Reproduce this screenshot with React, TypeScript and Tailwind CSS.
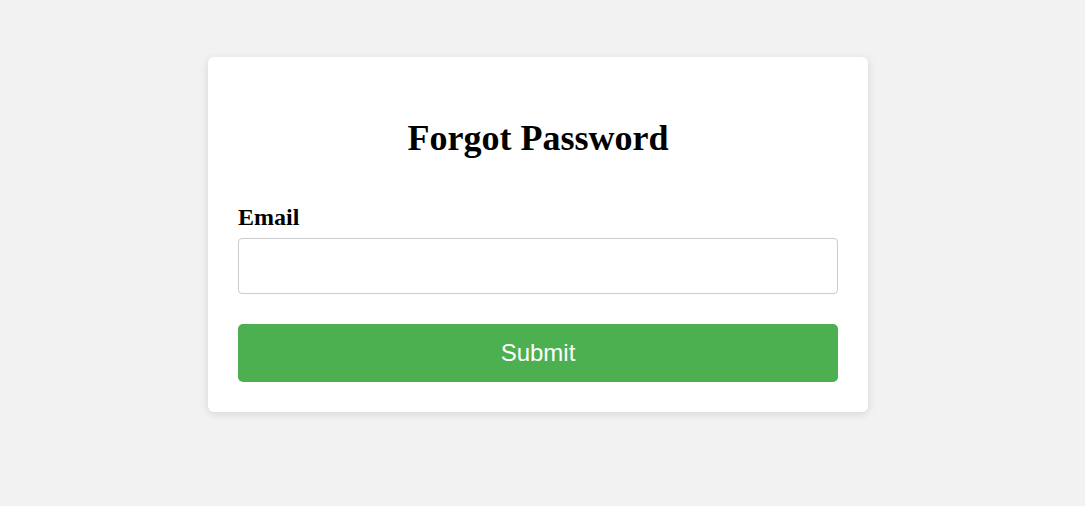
export default function App() {
  return (
    <div className="min-h-[506px] w-full bg-[#f2f2f2] flex justify-center pr-[9px] pt-[57px]">
      <div className="w-[660px] h-[355px] bg-white rounded-[6px] shadow-[0_2px_8px_rgba(0,0,0,0.12)] px-[30px] pt-[30px] flex flex-col">
        <h1
          className="mt-[33px] text-center text-[36px] leading-[36px] font-bold text-black"
          style={{ fontFamily: '"Liberation Serif", "Times New Roman", serif' }}
        >
          Forgot Password
        </h1>
        <label
          className="mt-[49px] mb-[1px] text-[24px] leading-[24px] font-bold text-black"
          style={{ fontFamily: '"Liberation Serif", "Times New Roman", serif' }}
        >
          Email
        </label>
        <input
          type="email"
          className="mt-[8px] h-[56px] w-full border border-[#cccccc] rounded-[4px] px-3 outline-none"
        />
        <button
          className="mt-[30px] h-[58px] w-full bg-[#4caf50] text-white rounded-[5px] text-[24px]"
          style={{ fontFamily: '"Liberation Sans", Arial, sans-serif' }}
        >
          Submit
        </button>
      </div>
    </div>
  );
}
